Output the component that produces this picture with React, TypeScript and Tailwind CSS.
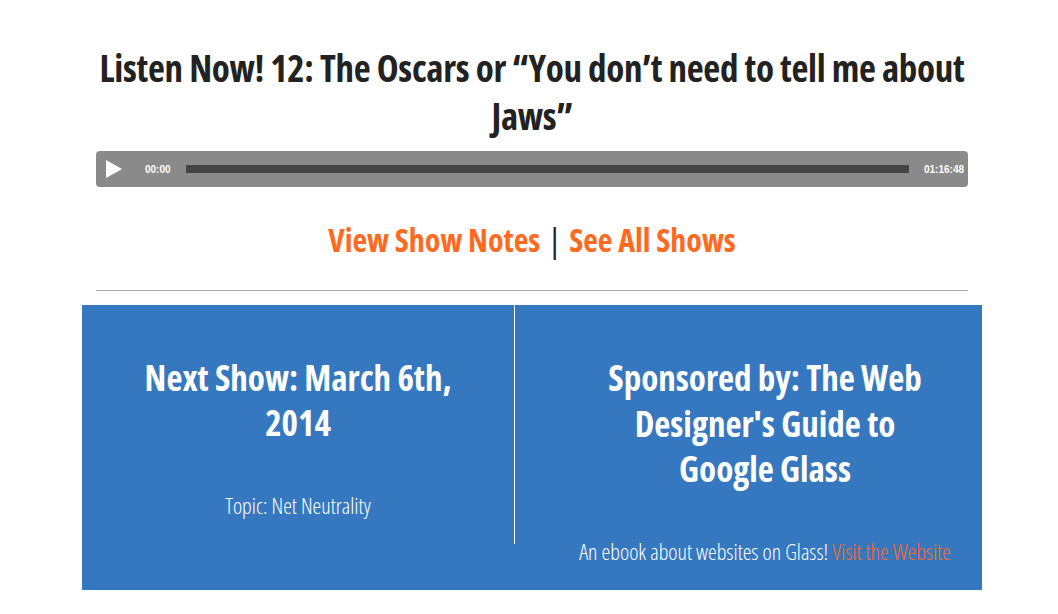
import React from "react";

const cond = { fontFamily: '"Open Sans", "Noto Sans", sans-serif' };

function Player() {
  return (
    <div className="flex h-[36px] items-center rounded-[4px] bg-[#8a8a8a] font-['Liberation_Sans',Arial,sans-serif] text-[10px] font-bold text-white">
      <svg width="16" height="18" viewBox="0 0 16 18" className="ml-[10px]">
        <path d="M0 0 L16 9 L0 18 Z" fill="#fff" />
      </svg>
      <span className="ml-[23px]">00:00</span>
      <div className="mx-[15px] h-[8px] flex-1 bg-[#444444]" />
      <span className="mr-[4px]">01:16:48</span>
    </div>
  );
}

export default function App() {
  return (
    <div className="min-h-screen bg-white font-stretch-condensed" style={cond}>
      <div className="ml-[82px] w-[900px] pt-[44px]">
        <div className="px-[14px]">
          <h1 className="text-center text-[37px] font-bold leading-[48px] tracking-[-0.3px] text-[#222222]">
            Listen Now! 12: The Oscars or “You don’t need to tell me about Jaws”
          </h1>
          <div className="mt-[11px]">
            <Player />
          </div>
          <p className="mt-[34px] text-center text-[32px] font-bold leading-[38px]">
            <a className="text-[#ff6a21]">View Show Notes</a>
            <span className="mx-[8px] font-normal text-[#222222]">|</span>
            <a className="text-[#ff6a21]">See All Shows</a>
          </p>
          <hr className="mt-[31px] border-t border-[#aaaaaa]" />
        </div>

        <div className="mt-[14px] flex items-start bg-[#3578bf] pb-[25px] text-center text-white">
          <div className="w-[433px] shrink-0 border-r border-white px-[40px] pt-[50px] pb-[25px]">
            <h2 className="text-[35px] font-bold leading-[45px]">
              Next Show: March 6th, 2014
            </h2>
            <p className="mt-[46px] text-[22px] font-light leading-[28px]">
              Topic: Net Neutrality
            </p>
          </div>
          <div className="ml-[33px] flex-1 px-[55px] pt-[50px]">
            <h2 className="text-[35px] font-bold leading-[45.5px]">
              Sponsored by: The Web Designer's Guide to Google Glass
            </h2>
            <p className="-mx-[55px] mt-[45px] text-[22px] font-light leading-[28px]">
              An ebook about websites on Glass!{" "}
              <a className="text-[#ff6626]">Visit the Website</a>
            </p>
          </div>
        </div>
      </div>
    </div>
  );
}
